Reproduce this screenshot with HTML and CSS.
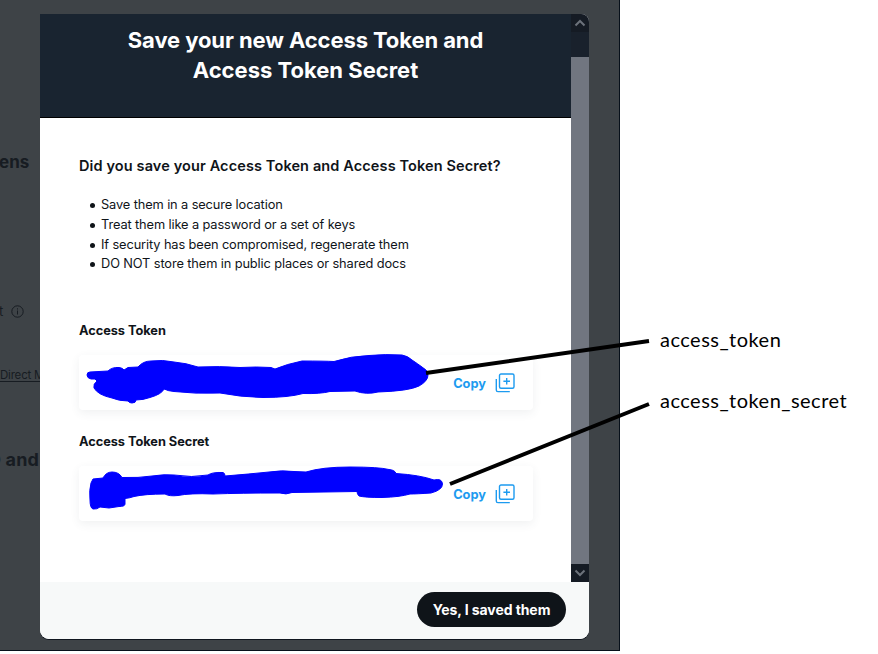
FILE: index.html
```html
<!DOCTYPE html>
<html lang="en">
<head>
<meta charset="utf-8">
<title>Access Token</title>
<link rel="stylesheet" href="styles.css">
</head>
<body>
<main class="canvas">
  <div class="backdrop">
    <span class="behind behind-tokens">ens</span>
    <span class="behind behind-info">t <svg width="13" height="13" viewBox="0 0 13 13" fill="none" stroke="currentColor"><circle cx="6.5" cy="6.5" r="5.7"/><path d="M6.5 5.5v4M6.5 3.3v1.2"/></svg></span>
    <span class="behind behind-link">Direct M</span>
    <span class="behind behind-and">D and</span>
    <section class="modal">
      <div class="scroll-area">
        <div class="content">
          <header class="header"><h1><span class="title-one">Save your new Access Token and</span><br><span class="title-two">Access Token Secret</span></h1></header>
          <div class="body">
            <h2>Did you save your Access Token and Access Token Secret?</h2>
            <ul>
              <li>Save them in a secure location</li>
              <li>Treat them like a password or a set of keys</li>
              <li>If security has been compromised, regenerate them</li>
              <li>DO NOT store them in public places or shared docs</li>
            </ul>
            <h3>Access Token</h3>
            <div class="card"><span class="copy">Copy</span><svg class="icon" width="20" height="20" viewBox="0 0 20 20" fill="none" stroke="currentColor" stroke-width="1.4"><rect x="4.5" y="1" width="14.5" height="14.3" rx="1.5"/><path d="M11.7 5v6.6M8.400 8.300h6.600M1.300 6v11q0 1.600 1.600 1.600H14.800"/></svg></div>
            <h3>Access Token Secret</h3>
            <div class="card"><span class="copy">Copy</span><svg class="icon" width="20" height="20" viewBox="0 0 20 20" fill="none" stroke="currentColor" stroke-width="1.4"><rect x="4.5" y="1" width="14.5" height="14.3" rx="1.5"/><path d="M11.7 5v6.6M8.400 8.300h6.600M1.300 6v11q0 1.600 1.600 1.600H14.800"/></svg></div>
          </div>
        </div>
        <div class="scrollbar">
          <div class="cap"><svg width="12" height="8" viewBox="0 0 12 8"><path d="M1.5 6.5 6 2l4.5 4.5"/></svg></div>
          <div class="track"></div>
          <div class="thumb"></div>
          <div class="cap"><svg width="12" height="8" viewBox="0 0 12 8"><path d="M1.5 1.5 6 6l4.5-4.5"/></svg></div>
        </div>
      </div>
      <footer class="footer"><button>Yes, I saved them</button></footer>
    </section>
  </div>
  <svg class="marks" width="878" height="654" viewBox="0 0 878 654">
    <g fill="#00f" stroke="#00f" stroke-width="1" stroke-linejoin="round">
      <path d="M90 372 108 371Q112 367 119 367.5Q123 368 124 370L128 367.5 138 367Q143 361 151 361Q163 359.5 174 362Q186 363 198 367Q220 366 240 367.5Q257 366.5 271 367.5L275 369Q287 364 302 361Q324 361 334 361.5Q351 356 369 355.5Q385 354 402 355Q408 356 412 360Q418 364 422 367Q428 370 428 375Q428 381 419 386Q409 391 378 392Q366 395 355 391L330 391.5Q320 394 303 393.5Q289 397.5 263 397.5Q240 397 220 393Q195 394 174 391.5Q168 391 164 389Q162 394 150 397.5Q143 400 136 400Q136 403 132 403Q129 403 128 401Q119 401 112 398Q98 395 94 388Q93 384 97 381L95 379H91Q87 378 87 375Q87 372 90 372Z"/>
      <path d="M93 479 103 478Q106 472 112 472Q119 472 122 477.5Q139 478 152 476Q165 474 174 475Q192 478 208 475Q212 472 223 472.5Q225 473 225 476Q250 474 269 472Q282 470 294 471.5L306 472Q322 467 350 467Q379 467 389 469.5Q395 470 396 473.5Q420 475 434 480Q442 478 442.5 484Q442.5 490 431 493Q416 494 410 494Q400 497 382 497.5Q365 497.5 359 496Q357 494 357 491.5L292 492.5Q286 495 280 493Q240 493 213 494Q190 493 178 495.500Q169 496.500 165 494Q145 494 134 496.500Q130 498 125 498.500V504Q125 506.5 119 506.5L109 508 100 507Q97 509.5 93 509Q90 508 90 500Q89 490 91 483Z"/>
    </g>
    <path class="arrow" d="M426 373 649 341M450 484 649 404"/>
  </svg>
  <aside class="labels"><p class="label-one">access_token</p><p class="label-two">access_token_secret</p></aside>
</main>
</body>
</html>
```

FILE: styles.css
```css
* { box-sizing: border-box; }
body { margin: 0; background: #fff; color: #0f1419; font-family: Inter, "Liberation Sans", sans-serif; }
.canvas { position: relative; display: flex; width: 878px; height: 654px; overflow: hidden; }
.backdrop { position: relative; width: 620px; height: 651px; padding: 14px 0 0 40px; overflow: hidden; background: #3e4347; border-right: 1px solid #07101a; border-bottom: 1px solid #07101a; }
.behind { position: absolute; left: 0; color: #171c22; white-space: nowrap; line-height: 20px; }
.behind-tokens { top: 152px; left: -1px; font-size: 17px; font-weight: 700; }
.behind-info { top: 301px; left: -1px; font-size: 13px; display: flex; gap: 8px; align-items: center; }
.behind-link { top: 365px; font-size: 11.5px; text-decoration: underline; text-underline-offset: 2px; letter-spacing: -.2px; }
.behind-and { top: 450px; left: -12px; font-size: 18px; font-weight: 700; letter-spacing: .15px; }
.modal { position: relative; width: 549px; height: 625px; border-radius: 0 8px 9px 9px; overflow: hidden; background: #fff; box-shadow: 0 1px 0 #10161f; }
.scroll-area { display: flex; height: 568px; }
.content { width: 531px; }
.header { height: 104px; padding-top: 11px; background: #192430; border-bottom: 1px solid #000; text-align: center; color: #fff; }
h1, h2, h3, ul, p { margin: 0; }
h1 { font-size: 22px; line-height: 30px; font-weight: 700; white-space: nowrap; }
.title-one { letter-spacing: -.1px; }
.body { padding: 38px 38px 0 39px; }
h2 { font-size: 14.5px; line-height: 20px; font-weight: 600; white-space: nowrap; letter-spacing: .12px; }
ul { margin-top: 19px; padding-left: 22px; list-style: none; font-size: 12.8px; line-height: 19.8px; letter-spacing: -.11px; }
li { position: relative; white-space: nowrap; }
li::before { content: ""; position: absolute; left: -11px; top: 8px; width: 5px; height: 5px; border-radius: 50%; background: #0f1419; }
h3 { margin-top: 47px; font-size: 12.8px; line-height: 20px; font-weight: 700; letter-spacing: -.05px; }
.card { display: flex; align-items: center; justify-content: flex-end; width: 454px; height: 55px; margin-top: 14px; padding-right: 18px; border-radius: 4px; background: #fff; box-shadow: 0 3px 10px rgba(60,80,90,.08); color: #1d9bf0; }
.card + h3 { margin-top: 22px; }
.copy { font-size: 12.8px; font-weight: 700; margin-right: 9px; padding-top: 1px; }
.scrollbar { display: flex; flex-direction: column; width: 18px; background: #717680; }
.cap { display: flex; align-items: center; justify-content: center; height: 18px; background: #151b24; }
.cap svg { fill: none; stroke: #6c727b; stroke-width: 2; }
.track { height: 25px; background: #19212c; }
.thumb { flex: 1; }
.footer { display: flex; justify-content: flex-end; height: 57px; padding: 10px 23px 0 0; background: #f7f9f9; }
button { width: 149px; height: 35px; padding: 0; border: 0; border-radius: 18px; background: #0f1419; color: #fff; font: 700 14px Inter, sans-serif; letter-spacing: -.08px; white-space: nowrap; }
.marks { position: absolute; left: 0; top: 0; }
.arrow { fill: none; stroke: #000; stroke-width: 4; }
.labels { padding: 324px 0 0 40px; font-family: Lato, sans-serif; font-size: 20px; line-height: 30px; letter-spacing: .48px; color: #000; }
.label-two { margin-top: 31px; }
```
